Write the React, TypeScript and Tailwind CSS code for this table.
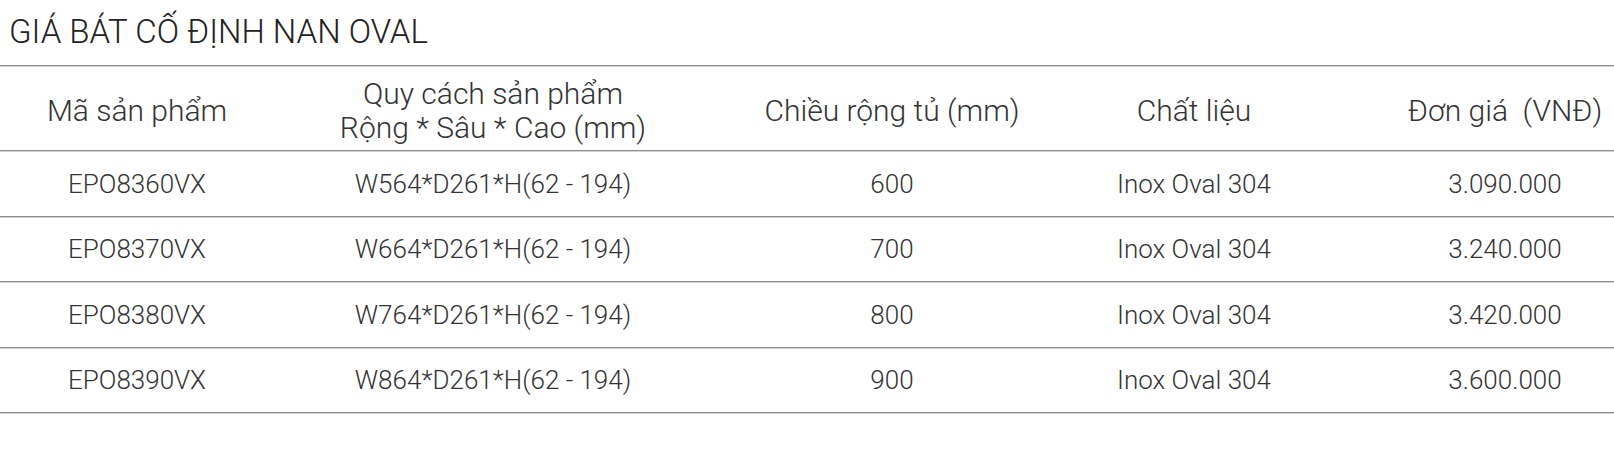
const rows = [
  { code: "EPO8360VX", spec: "W564*D261*H(62 - 194)", width: "600", material: "Inox Oval 304", price: "3.090.000" },
  { code: "EPO8370VX", spec: "W664*D261*H(62 - 194)", width: "700", material: "Inox Oval 304", price: "3.240.000" },
  { code: "EPO8380VX", spec: "W764*D261*H(62 - 194)", width: "800", material: "Inox Oval 304", price: "3.420.000" },
  { code: "EPO8390VX", spec: "W864*D261*H(62 - 194)", width: "900", material: "Inox Oval 304", price: "3.600.000" },
];

const cols = "grid grid-cols-[274px_438px_360px_244px_1fr]";
const line = "border-b border-[#8f8f8f] shadow-[0_1px_0_#d2d2d2]";

export default function App() {
  return (
    <div className="min-h-screen bg-white text-[#333] font-light" style={{ fontFamily: "Roboto, 'Liberation Sans', sans-serif" }}>
      <div className={`h-[66px] flex items-center px-[9px] pb-[2px] ${line}`}>
        <h1 className="text-[33px] font-light text-[#222] leading-none">GIÁ BÁT CỐ ĐỊNH NAN OVAL</h1>
      </div>

      <div className={`${cols} h-[85px] items-center text-[30px] text-center pt-[5px] ${line}`}>
        <div>Mã sản phẩm</div>
        <div className="leading-[34px]">
          <div>Quy cách sản phẩm</div>
          <div>Rộng * Sâu * Cao (mm)</div>
        </div>
        <div>Chiều rộng tủ (mm)</div>
        <div>Chất liệu</div>
        <div className="pl-[80px]">Đơn giá&nbsp; (VNĐ)</div>
      </div>

      {rows.map((r) => (
        <div key={r.code} className={`${cols} h-[65.5px] items-center text-[26px] text-center pt-[2px] ${line}`}>
          <div>{r.code}</div>
          <div>{r.spec}</div>
          <div>{r.width}</div>
          <div>{r.material}</div>
          <div className="pl-[80px]">{r.price}</div>
        </div>
      ))}
    </div>
  );
}
